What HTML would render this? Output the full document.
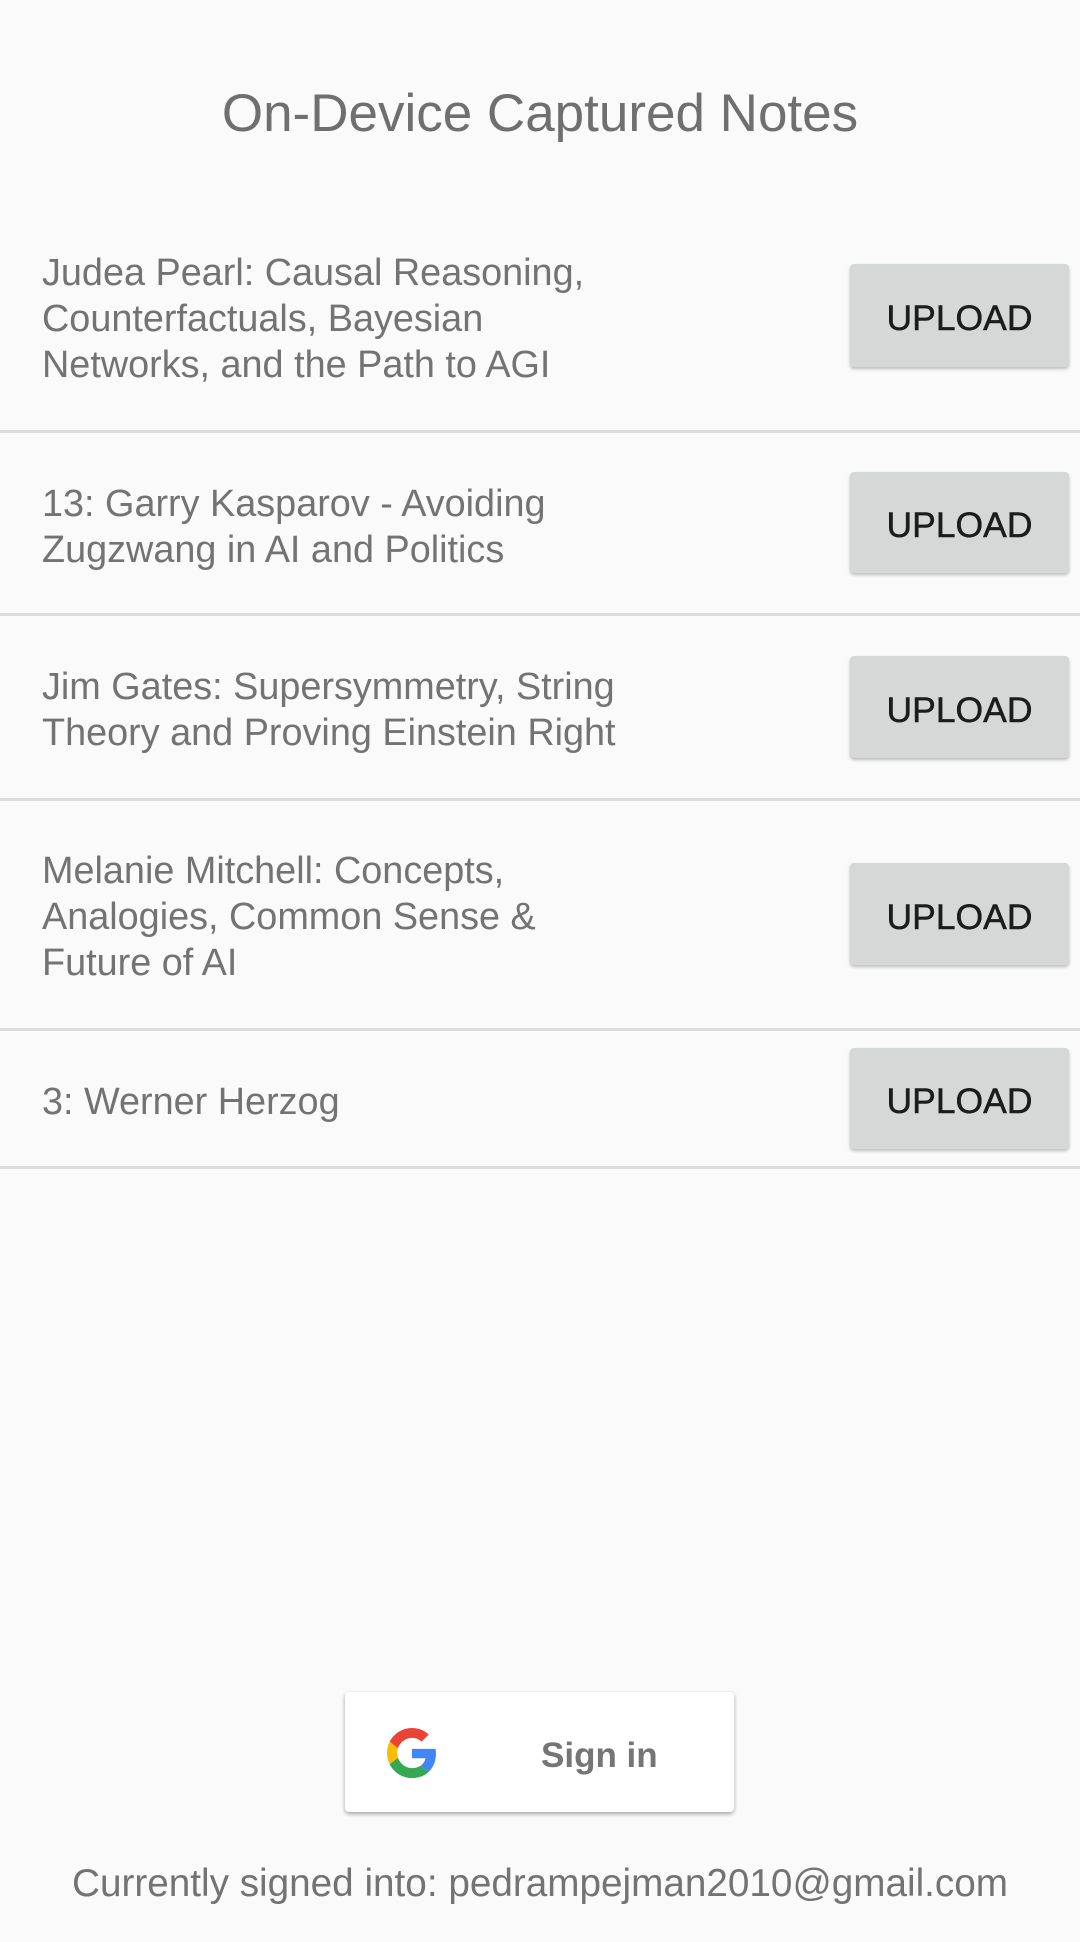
<!DOCTYPE html>
<html><head><style>
body{margin:0;width:1080px;height:1942px;background:#fafafa;font-family:"Liberation Sans",sans-serif;position:relative;overflow:hidden}
.a{position:absolute}
.t{left:0;width:1080px;text-align:center;top:84px;font-size:53px;color:#6f6f6f;line-height:60px}
.txt{left:42px;font-size:37.8px;color:#737373;line-height:46px;margin-top:2px}
.div{left:0;width:1080px;height:3px;background:#dcdcdc}
.btn{left:850px;width:219px;background:#d6d7d7;border-radius:4px;box-shadow:0 2px 3px rgba(0,0,0,.25);display:flex;align-items:center;justify-content:center;font-size:35.5px;color:#1c1c1c;-webkit-text-stroke:0.5px #1c1c1c;padding-top:6px;box-sizing:border-box}
</style></head><body>
<div class="a t">On-Device Captured Notes</div>

<div class="a txt" style="top:248px">Judea Pearl: Causal Reasoning,<br>Counterfactuals, Bayesian<br>Networks, and the Path to AGI</div>
<div class="a btn" style="top:264px;height:103px">UPLOAD</div>
<div class="a div" style="top:430px"></div>

<div class="a txt" style="top:479px">13: Garry Kasparov - Avoiding<br>Zugzwang in AI and Politics</div>
<div class="a btn" style="top:472px;height:101px">UPLOAD</div>
<div class="a div" style="top:613px"></div>

<div class="a txt" style="top:662px">Jim Gates: Supersymmetry, String<br>Theory and Proving Einstein Right</div>
<div class="a btn" style="top:656px;height:102px">UPLOAD</div>
<div class="a div" style="top:798px"></div>

<div class="a txt" style="top:846px">Melanie Mitchell: Concepts,<br>Analogies, Common Sense &amp;<br>Future of AI</div>
<div class="a btn" style="top:863px;height:102px">UPLOAD</div>
<div class="a div" style="top:1028px"></div>

<div class="a txt" style="top:1077px">3: Werner Herzog</div>
<div class="a btn" style="top:1048px;height:101px">UPLOAD</div>
<div class="a div" style="top:1166px"></div>

<div class="a" style="left:345px;top:1692px;width:389px;height:120px;background:#fff;border-radius:4px;box-shadow:0 2px 4px rgba(0,0,0,.35)">
<svg class="a" style="left:42px;top:36px" width="50" height="50" viewBox="0 0 48 48">
<path fill="#EA4335" d="M24 9.5c3.54 0 6.71 1.22 9.21 3.6l6.85-6.85C35.9 2.38 30.47 0 24 0 14.62 0 6.51 5.38 2.56 13.22l7.98 6.19C12.43 13.72 17.74 9.5 24 9.5z"/>
<path fill="#4285F4" d="M46.98 24.55c0-1.57-.15-3.09-.38-4.55H24v9.02h12.94c-.58 2.96-2.26 5.48-4.78 7.18l7.73 6c4.51-4.18 7.09-10.36 7.09-17.65z"/>
<path fill="#FBBC05" d="M10.53 28.59c-.48-1.45-.76-2.99-.76-4.59s.27-3.14.76-4.59l-7.98-6.19C.92 16.46 0 20.12 0 24c0 3.88.92 7.54 2.56 10.78l7.97-6.19z"/>
<path fill="#34A853" d="M24 48c6.48 0 11.93-2.13 15.89-5.81l-7.73-6c-2.15 1.45-4.92 2.3-8.16 2.3-6.26 0-11.57-4.22-13.47-9.91l-7.98 6.19C6.51 42.62 14.62 48 24 48z"/>
</svg>
<div class="a" style="left:196px;top:42px;font-size:35px;font-weight:bold;color:#757575;line-height:44px">Sign in</div>
</div>

<div class="a" style="left:0;width:1080px;text-align:center;top:1862px;font-size:38.7px;color:#737373;line-height:44px">Currently signed into: pedrampejman2010@gmail.com</div>
</body></html>
